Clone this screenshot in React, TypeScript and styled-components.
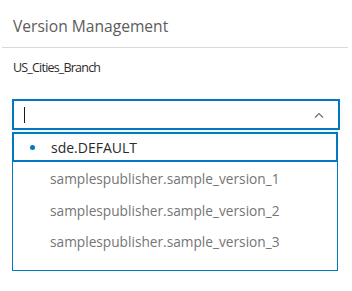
import styled, { createGlobalStyle } from "styled-components";

const GlobalStyle = createGlobalStyle`
  body {
    margin: 0;
    background: #ffffff;
    font-family: "Open Sans", "Noto Sans", sans-serif;
  }
`;

const Panel = styled.div`
  width: 352px;
  height: 291px;
  background: #ffffff;
  overflow: hidden;
`;

const Header = styled.div`
  height: 48px;
  margin: 0 4px 0 2px;
  padding: 4px 0 0 11px;
  box-sizing: border-box;
  display: flex;
  align-items: center;
  border-bottom: 1px solid #d9d9d9;
`;

const Title = styled.h2`
  margin: 0;
  font-size: 15.6px;
  font-weight: 400;
  color: #5c5c5c;
`;

const Body = styled.div`
  padding: 11px 12px 0 12px;
`;

const BranchName = styled.div`
  font-size: 12.5px;
  letter-spacing: -0.8px;
  color: #2b2b2b;
  height: 18px;
  line-height: 18px;
  padding-left: 1px;
`;

const Combo = styled.div`
  margin-top: 22px;
  width: 328px;
`;

const InputBox = styled.div`
  box-sizing: border-box;
  height: 31px;
  border: 2px solid #0079c1;
  display: flex;
  align-items: center;
  padding: 0 14px 0 10px;
  box-shadow: 0 4px 8px rgba(0, 0, 0, 0.06);
`;

const Caret = styled.span`
  width: 1px;
  height: 16px;
  background: #1a1a1a;
`;

const Chevron = styled.svg`
  margin-left: auto;
  width: 10px;
  height: 6px;
`;

const List = styled.ul`
  list-style: none;
  margin: 2px 0 0 0;
  padding: 0 0 12px 0;
  box-sizing: border-box;
  width: 326px;
  border: 1px solid #0079c1;
  border-top: none;
`;

const Item = styled.li<{ $active?: boolean }>`
  box-sizing: border-box;
  height: ${(p) => (p.$active ? "30px" : "31.5px")};
  margin: ${(p) => (p.$active ? "0 -1px 1px -1px" : "0")};
  border: ${(p) => (p.$active ? "2px solid #0079c1" : "none")};
  display: flex;
  align-items: center;
  padding-left: ${(p) => (p.$active ? "16px" : "37px")};
  font-size: ${(p) => (p.$active ? "14px" : "13.7px")};
  color: ${(p) => (p.$active ? "#2b2b2b" : "#757575")};
`;

const Dot = styled.span`
  width: 5px;
  height: 5px;
  border-radius: 50%;
  background: #0079c1;
  margin-right: 16px;
`;

const versions = [
  "samplespublisher.sample_version_1",
  "samplespublisher.sample_version_2",
  "samplespublisher.sample_version_3",
];

export default function App() {
  return (
    <>
      <GlobalStyle />
      <Panel>
        <Header>
          <Title>Version Management</Title>
        </Header>
        <Body>
          <BranchName>US_Cities_Branch</BranchName>
          <Combo>
            <InputBox>
              <Caret />
              <Chevron viewBox="0 0 10 6">
                <path d="M1 5.5 L5 1.5 L9 5.5" fill="none" stroke="#6e6e6e" strokeWidth="1.2" />
              </Chevron>
            </InputBox>
            <List>
              <Item $active>
                <Dot />
                sde.DEFAULT
              </Item>
              {versions.map((v) => (
                <Item key={v}>{v}</Item>
              ))}
            </List>
          </Combo>
        </Body>
      </Panel>
    </>
  );
}
